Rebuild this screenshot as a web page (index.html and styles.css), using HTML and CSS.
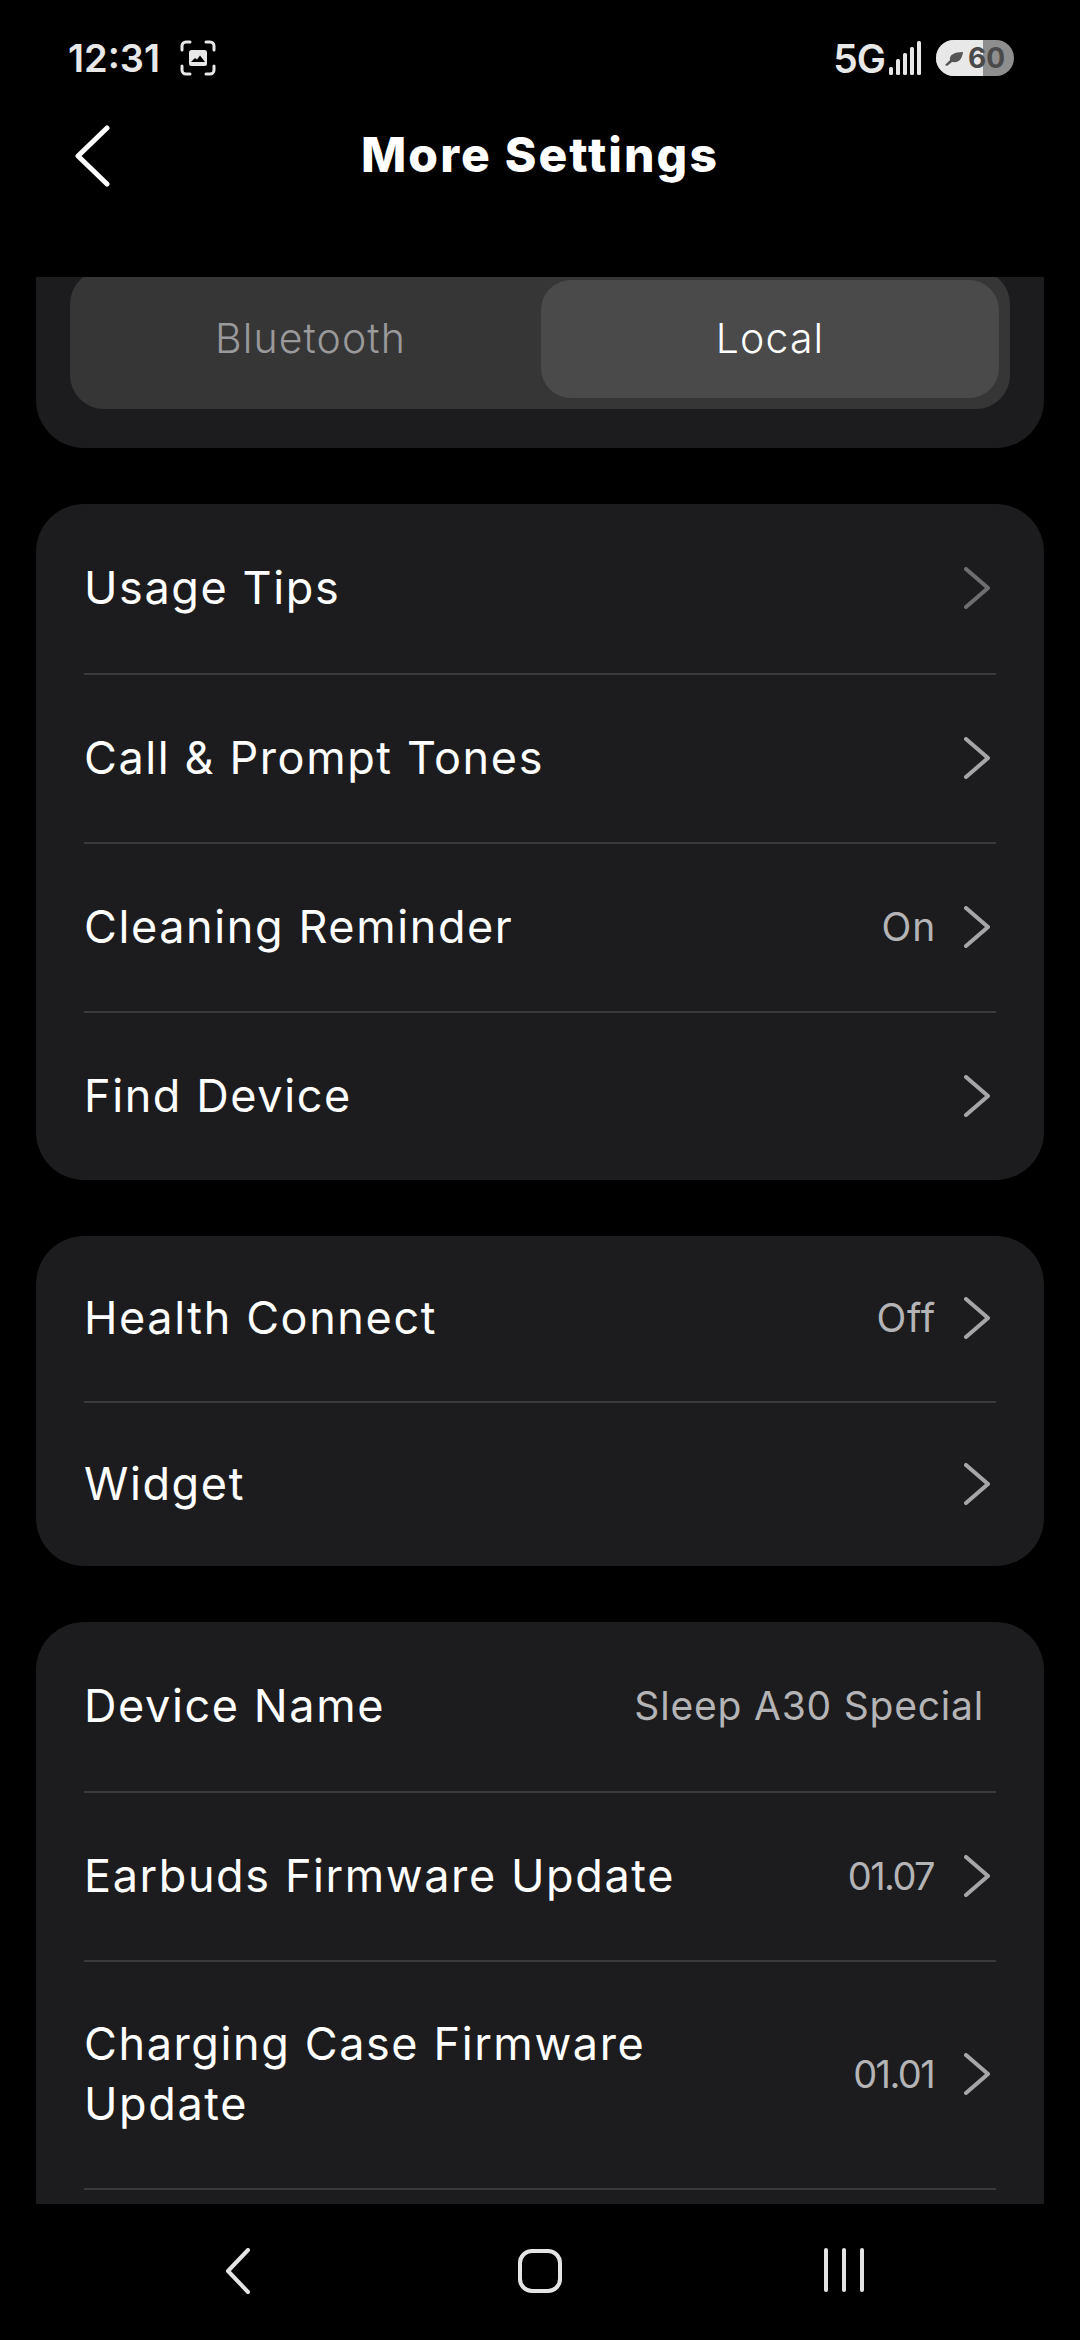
FILE: index.html
```html
<!DOCTYPE html>
<html lang="en">
<head>
<meta charset="utf-8">
<title>More Settings</title>
<link rel="stylesheet" href="styles.css">
</head>
<body>
<div class="screen">
  <div class="status">
    <div class="status-left">
      <span class="time">12:31</span>
      <svg class="shot" viewBox="0 0 36 36" fill="none" stroke="#e8e8e8" stroke-width="3" stroke-linecap="round">
        <path d="M2 10V6a4 4 0 0 1 4-4h4M26 2h4a4 4 0 0 1 4 4v4M34 26v4a4 4 0 0 1-4 4h-4M10 34H6a4 4 0 0 1-4-4v-4"/>
        <rect x="9" y="10" width="18" height="16" rx="2.5" fill="#e8e8e8" stroke="none"/>
        <path d="M11 22l4-4 2 1.500 3-4 5 6.500z" fill="#000" stroke="none"/>
      </svg>
    </div>
    <div class="status-right">
      <span class="net">5G</span>
      <svg class="signal" viewBox="0 0 34 34" fill="#e8e8e8">
        <rect x="0" y="26" width="4" height="8" rx="1.500"/>
        <rect x="7" y="18" width="4" height="16" rx="1.500"/>
        <rect x="14" y="12" width="4" height="22" rx="1.500"/>
        <rect x="21" y="6" width="4" height="28" rx="1.500"/>
        <rect x="28" y="0" width="4" height="34" rx="1.500"/>
      </svg>
      <div class="battery">
        <div class="battery-fill"></div>
        <svg class="leaf" viewBox="0 0 20 16"><path d="M1 15l5-5c-1-5 4-8 13-8-1 8-5 11-10 10l-1 0-5 4z" fill="#555"/></svg>
        <span class="battery-num">60</span>
      </div>
    </div>
  </div>

  <header class="topbar">
    <svg class="back" viewBox="0 0 36 62" fill="none" stroke="#fff" stroke-width="5" stroke-linecap="round" stroke-linejoin="round"><path d="M33 3L4 31l29 28"/></svg>
    <h1 class="title">More Settings</h1>
  </header>

  <main class="scroller">
    <div class="scroll-inner">
      <section class="card card-toggle">
        <div class="segmented">
          <div class="seg">Bluetooth</div>
          <div class="seg seg-on">Local</div>
        </div>
      </section>

      <section class="card">
        <div class="row"><span class="label">Usage Tips</span><svg class="chev chev-dim" viewBox="0 0 26 42"><path d="M2 2l22 19L2 40"/></svg></div>
        <div class="row"><span class="label">Call &amp; Prompt Tones</span><svg class="chev" viewBox="0 0 26 42"><path d="M2 2l22 19L2 40"/></svg></div>
        <div class="row"><span class="label">Cleaning Reminder</span><span class="value">On</span><svg class="chev" viewBox="0 0 26 42"><path d="M2 2l22 19L2 40"/></svg></div>
        <div class="row"><span class="label">Find Device</span><svg class="chev" viewBox="0 0 26 42"><path d="M2 2l22 19L2 40"/></svg></div>
      </section>

      <section class="card">
        <div class="row row-short"><span class="label">Health Connect</span><span class="value">Off</span><svg class="chev" viewBox="0 0 26 42"><path d="M2 2l22 19L2 40"/></svg></div>
        <div class="row row-short"><span class="label">Widget</span><svg class="chev" viewBox="0 0 26 42"><path d="M2 2l22 19L2 40"/></svg></div>
      </section>

      <section class="card">
        <div class="row"><span class="label">Device Name</span><span class="value value-end">Sleep A30 Special</span></div>
        <div class="row"><span class="label">Earbuds Firmware Update</span><span class="value value-num">01.07</span><svg class="chev" viewBox="0 0 26 42"><path d="M2 2l22 19L2 40"/></svg></div>
        <div class="row row-tall"><span class="label label-wrap">Charging Case Firmware Update</span><span class="value value-num">01.01</span><svg class="chev" viewBox="0 0 26 42"><path d="M2 2l22 19L2 40"/></svg></div>
        <div class="row"><span class="label">&nbsp;</span></div>
      </section>
    </div>
  </main>

  <nav class="navbar">
    <svg class="nav-back" viewBox="0 0 26 46" fill="none" stroke="#e4e4e4" stroke-width="4" stroke-linecap="round" stroke-linejoin="round"><path d="M23 2L3 23l20 21"/></svg>
    <svg class="nav-home" viewBox="0 0 46 46" fill="none" stroke="#e4e4e4" stroke-width="4"><rect x="3" y="3" width="40" height="40" rx="12"/></svg>
    <svg class="nav-recent" viewBox="0 0 42 44" fill="none" stroke="#e4e4e4" stroke-width="4" stroke-linecap="round"><path d="M3 2v40M21 2v40M39 2v40"/></svg>
  </nav>
</div>
</body>
</html>
```

FILE: styles.css
```css
* { box-sizing: border-box; }
html, body { margin: 0; padding: 0; background: #000; }
.screen {
  width: 1080px;
  height: 2340px;
  background: #000;
  display: flex;
  flex-direction: column;
  font-family: "Inter", "Liberation Sans", sans-serif;
  color: #fff;
  overflow: hidden;
}
.status {
  height: 116px;
  flex: none;
  padding: 0 66px 0 68px;
  display: flex;
  justify-content: space-between;
  align-items: center;
}
.status-left, .status-right { display: flex; align-items: center; }
.time {
  font-size: 38px;
  font-weight: 600;
  color: #e8e8e8;
}
.shot { width: 36px; height: 36px; margin-left: 20px; }
.net {
  font-size: 39px;
  font-weight: 600;
  color: #e8e8e8;
  letter-spacing: -1px;
}
.signal { width: 34px; height: 34px; margin-left: 4px; }
.battery {
  position: relative;
  width: 78px;
  height: 36px;
  margin-left: 13px;
  border-radius: 18px;
  background: #8e8e8e;
  overflow: hidden;
  display: flex;
  align-items: center;
  padding-left: 8px;
}
.battery-fill {
  position: absolute;
  left: 0;
  top: 0;
  bottom: 0;
  width: 47px;
  background: #e8e8e8;
}
.leaf { position: relative; width: 20px; height: 16px; }
.battery-num {
  position: relative;
  font-size: 28px;
  font-weight: 700;
  color: #4a4a4a;
  margin-left: 4px;
}
.topbar {
  position: relative;
  height: 77px;
  flex: none;
  display: flex;
  align-items: center;
  justify-content: center;
}
.back { position: absolute; left: 74px; top: 9px; width: 36px; height: 62px; }
.title {
  margin: 0;
  font-size: 48px;
  font-weight: 800;
  letter-spacing: 2.1px;
  color: #fff;
}
.scroller {
  height: 1927px;
  margin-top: 84px;
  flex: none;
  padding: 0 36px;
  overflow: hidden;
}
.scroll-inner { margin-top: -60px; display: flex; flex-direction: column; gap: 56px; }
.card {
  background: #1c1c1e;
  border-radius: 48px;
  padding: 0 48px;
  flex: none;
}
.card-toggle { padding: 0 34px 39px; height: 231px; display: flex; align-items: flex-end; }
.segmented {
  width: 100%;
  height: 139px;
  background: #363636;
  border-radius: 34px;
  padding: 10px 11px 11px 10px;
  display: flex;
}
.seg {
  flex: 1;
  display: flex;
  align-items: center;
  justify-content: center;
  padding-bottom: 3px;
  font-size: 41px;
  font-weight: 300;
  letter-spacing: 1.1px;
  color: #9a9a9c;
}
.seg-on {
  flex: none;
  width: 458px;
  background: #4a4a4a;
  border-radius: 30px;
  color: #fff;
}
.row {
  height: 169px;
  display: flex;
  align-items: center;
  padding-bottom: 2px;
}
.row + .row { border-top: 2px solid #3a3a3c; }
.row-short { height: 165px; }
.row-tall { height: 228px; }
.label {
  flex: 1;
  font-size: 45px;
  font-weight: 400;
  letter-spacing: 1.6px;
  color: #fff;
  line-height: 60px;
}
.label-wrap { flex: none; width: 620px; margin-right: auto; }
.value {
  font-size: 39px;
  font-weight: 400;
  letter-spacing: 0.8px;
  color: #b4b4b6;
  margin-right: 28px;
}
.value-num { font-size: 38px; letter-spacing: -1.6px; margin-right: 30px; }
.value-end { margin-right: 12px; }
.chev {
  width: 26px;
  height: 42px;
  margin-right: 6px;
  flex: none;
  fill: none;
  stroke: #a6a6a8;
  stroke-width: 4;
  stroke-linecap: round;
  stroke-linejoin: round;
}
.chev-dim { stroke: #6e6e70; }
.navbar {
  height: 136px;
  flex: none;
  position: relative;
  display: flex;
  align-items: flex-start;
  padding: 44px 0 0 225px;
}
.nav-back { width: 26px; height: 46px; }
.nav-home { width: 46px; height: 46px; margin-left: 266px; }
.nav-recent { width: 42px; height: 44px; margin-left: 260px; }
```
